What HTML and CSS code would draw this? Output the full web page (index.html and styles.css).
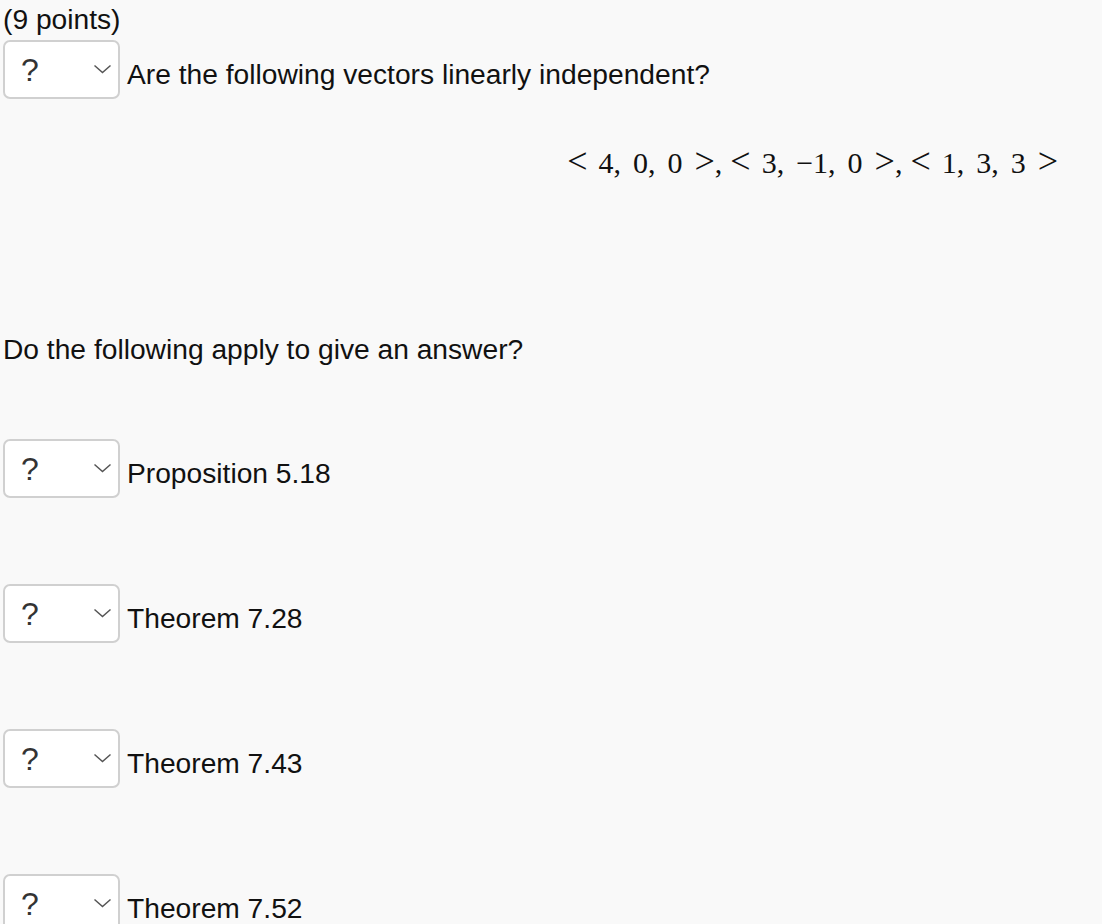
FILE: index.html
```html
<!DOCTYPE html>
<html>
<head>
<meta charset="utf-8">
<link rel="stylesheet" href="styles.css">
</head>
<body>
<div class="page">
  <div class="points">(9 points)</div>
  <div class="row">
    <div class="select"><span class="q">?</span><svg class="chev" width="19" height="10" viewBox="0 0 19 10"><path d="M1.5 1.5 L9.5 8.5 L17.5 1.5" fill="none" stroke="#555" stroke-width="1.5"/></svg></div>
    <span class="label">Are the following vectors linearly independent?</span>
  </div>
  <div class="math"><span class="vec"><span class="rel">&lt;</span><span class="n">4,</span><span class="n">0,</span><span class="n">0</span><span class="rel">&gt;</span></span>,<span class="vec"><span class="rel">&lt;</span><span class="n">3,</span><span class="n">−1,</span><span class="n">0</span><span class="rel">&gt;</span></span>,<span class="vec"><span class="rel">&lt;</span><span class="n one">1,</span><span class="n">3,</span><span class="n">3</span><span class="rel">&gt;</span></span></div>
  <div class="question">Do the following apply to give an answer?</div>
  <div class="row item">
    <div class="select"><span class="q">?</span><svg class="chev" width="19" height="10" viewBox="0 0 19 10"><path d="M1.5 1.5 L9.5 8.5 L17.5 1.5" fill="none" stroke="#555" stroke-width="1.5"/></svg></div>
    <span class="label">Proposition 5.18</span>
  </div>
  <div class="row item">
    <div class="select"><span class="q">?</span><svg class="chev" width="19" height="10" viewBox="0 0 19 10"><path d="M1.5 1.5 L9.5 8.5 L17.5 1.5" fill="none" stroke="#555" stroke-width="1.5"/></svg></div>
    <span class="label">Theorem 7.28</span>
  </div>
  <div class="row item">
    <div class="select"><span class="q">?</span><svg class="chev" width="19" height="10" viewBox="0 0 19 10"><path d="M1.5 1.5 L9.5 8.5 L17.5 1.5" fill="none" stroke="#555" stroke-width="1.5"/></svg></div>
    <span class="label">Theorem 7.43</span>
  </div>
  <div class="row item">
    <div class="select"><span class="q">?</span><svg class="chev" width="19" height="10" viewBox="0 0 19 10"><path d="M1.5 1.5 L9.5 8.5 L17.5 1.5" fill="none" stroke="#555" stroke-width="1.5"/></svg></div>
    <span class="label">Theorem 7.52</span>
  </div>
</div>
</body>
</html>
```

FILE: styles.css
```css
html, body {
  margin: 0;
  padding: 0;
  background: #f9f9f9;
}
body {
  font-family: "Liberation Sans", Arial, sans-serif;
  font-size: 28.2px;
  color: #111;
  overflow: hidden;
}
.page {
  display: flex;
  flex-direction: column;
  padding: 3px 0 0 3px;
}
.points {
  line-height: 32px;
  height: 37px;
}
.row {
  display: flex;
  align-items: center;
  height: 59px;
}
.select {
  box-sizing: border-box;
  width: 117px;
  height: 59px;
  border: 2px solid #d0d0d0;
  border-radius: 7px;
  background: #fff;
  position: relative;
  flex-shrink: 0;
}
.q {
  position: absolute;
  left: 16px;
  top: 10px;
  font-size: 32px;
  line-height: 36px;
  color: #333;
}
.chev {
  position: absolute;
  left: 88px;
  top: 22px;
}
.label {
  margin-left: 7px;
  padding-top: 8px;
  line-height: 32px;
}
.math {
  font-family: "Liberation Serif", "Times New Roman", serif;
  font-size: 30px;
  line-height: 40px;
  height: 40px;
  text-align: right;
  padding-right: 44px;
  margin-top: 44px;
  white-space: nowrap;
  color: #111;
}
.vec {
  margin-left: 8px;
}
.vec:first-child {
  margin-left: 0;
}
.rel {
  font-size: 36px;
  line-height: 30px;
}
.n {
  margin-left: 12px;
}
.n.one {
  margin-left: 20px;
}
.rel + .n {
  margin-left: 11px;
}
.n + .rel {
  margin-left: 12px;
}
.question {
  margin-top: 150px;
  line-height: 32px;
}
.item {
  margin-top: 86px;
}
.question + .item {
  margin-top: 74px;
}
```
